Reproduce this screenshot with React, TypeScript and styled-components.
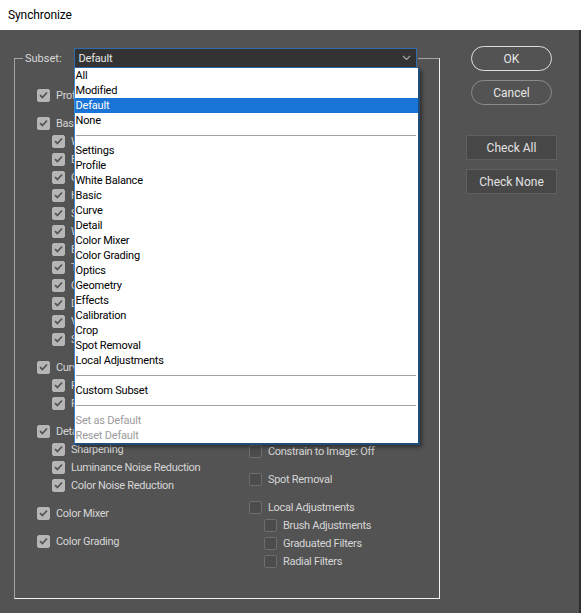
import React from "react";
import styled, { createGlobalStyle } from "styled-components";

const Global = createGlobalStyle`
  html, body { margin: 0; padding: 0; }
  body {
    width: 581px;
    height: 613px;
    overflow: hidden;
    font-family: Roboto, "Liberation Sans", sans-serif;
  }
`;

const Window = styled.div`
  width: 581px;
  height: 613px;
  display: flex;
  flex-direction: column;
  background: #535353;
`;

const TitleBar = styled.div`
  height: 30px;
  flex: none;
  display: flex;
  align-items: center;
  padding-left: 8px;
  background: #ffffff;
  color: #000000;
  font-size: 12px;
  letter-spacing: -0.1px;
`;

const Body = styled.div`
  flex: 1;
  display: flex;
  align-items: flex-start;
  padding: 16px 0 0 14px;
  border-right: 2px solid #2e2e2e;
`;

const Group = styled.fieldset`
  margin: 2px 0 0 0;
  padding: 0 0 0 8px;
  width: 426px;
  height: 551px;
  box-sizing: border-box;
  min-inline-size: 0;
  border: 1px solid;
  border-color: #a4a4a4 #f2f2f2 #f2f2f2 #a4a4a4;
`;

const Legend = styled.legend`
  display: flex;
  align-items: center;
  gap: 12px;
  padding: 0 1px 0 2px;
  color: #d8d8d8;
  font-size: 11px;
`;

const Select = styled.div`
  position: relative;
  width: 343px;
  height: 20px;
  box-sizing: border-box;
  display: flex;
  align-items: center;
  justify-content: space-between;
  padding: 0 5px 0 4px;
  background: #333333;
  border: 1px solid #2f6cab;
  color: #e6e6e6;
  font-size: 11px;
  letter-spacing: -0.2px;
`;

const Menu = styled.div`
  position: absolute;
  top: calc(100% + 1px);
  left: -1px;
  width: 346px;
  box-sizing: border-box;
  background: #ffffff;
  border-left: 1px solid #3b85d8;
  border-right: 2px solid #1e4b78;
  border-bottom: 2px solid #1e4b78;
  box-shadow: 2px 2px 4px rgba(0, 0, 0, 0.45);
  z-index: 10;
`;

const MenuItem = styled.div<{ $active?: boolean; $disabled?: boolean }>`
  height: 15px;
  line-height: 15px;
  padding-left: 1px;
  font-size: 11px;
  letter-spacing: -0.2px;
  white-space: nowrap;
  color: ${(p) => (p.$active ? "#ffffff" : p.$disabled ? "#9b9b9b" : "#000000")};
  background: ${(p) => (p.$active ? "#1a74d8" : "transparent")};
`;

const MenuSeparator = styled.div`
  height: 15px;
  display: flex;
  align-items: center;
  &::after {
    content: "";
    flex: 1;
    height: 1px;
    margin: 0 2px 0 1px;
    background: #a3a3a3;
  }
`;

const Columns = styled.div`
  display: grid;
  grid-template-columns: 212px 1fr;
  padding: 18px 0 0 14px;
`;

const Column = styled.div`
  display: flex;
  flex-direction: column;
`;

const Row = styled.div<{ $sub?: boolean; $group?: boolean }>`
  display: flex;
  align-items: center;
  gap: 6px;
  height: 18px;
  padding-left: ${(p) => (p.$sub ? "15px" : "0")};
  margin-top: ${(p) => (p.$group ? "10px" : "0")};
  color: #d6d6d6;
  font-size: 11px;
  letter-spacing: -0.3px;
  white-space: nowrap;
  &:first-child {
    margin-top: 0;
  }
`;

const Box = styled.span<{ $checked?: boolean }>`
  width: 13px;
  height: 13px;
  flex: none;
  box-sizing: border-box;
  border-radius: 2px;
  display: flex;
  align-items: center;
  justify-content: center;
  background: ${(p) => (p.$checked ? "#b6b6b6" : "#4c4c4c")};
  border: 1px solid ${(p) => (p.$checked ? "#b6b6b6" : "#6d6d6d")};
`;

const Buttons = styled.div`
  display: flex;
  flex-direction: column;
  align-items: center;
  width: 91px;
  margin-left: 26px;
`;

const PillButton = styled.button<{ $primary?: boolean }>`
  width: 81px;
  height: 25px;
  box-sizing: border-box;
  border-radius: 13px;
  border: 1.5px solid ${(p) => (p.$primary ? "#dedede" : "#8a8a8a")};
  background: transparent;
  color: #e6e6e6;
  font-family: inherit;
  font-size: 12px;
  padding: 0;
  & + & {
    margin-top: 9px;
  }
`;

const RectButton = styled.button<{ $first?: boolean }>`
  width: 91px;
  height: 25px;
  box-sizing: border-box;
  border: 1px solid #5f5f5f;
  background: #474747;
  color: #e2e2e2;
  font-family: inherit;
  font-size: 12px;
  padding: 0;
  margin-top: ${(p) => (p.$first ? "30px" : "9px")};
`;

type Item = { label: string; sub?: boolean; checked?: boolean };

const g = (label: string, checked: boolean): Item => ({ label, checked });
const s = (label: string, checked: boolean): Item => ({ label, sub: true, checked });

const leftItems: Item[] = [
  g("Profile", true),
  g("Basic", true),
  ...["White Balance", "Exposure", "Contrast", "Highlights", "Shadows", "Whites", "Blacks", "Texture", "Clarity", "Dehaze", "Vibrance", "Saturation"].map((l) => s(l, true)),
  g("Curve", true),
  s("Parametric Curve", true),
  s("Point Curve", true),
  g("Detail", true),
  s("Sharpening", true),
  s("Luminance Noise Reduction", true),
  s("Color Noise Reduction", true),
  g("Color Mixer", true),
  g("Color Grading", true),
];

const rightItems: Item[] = [
  g("Optics", false),
  s("Chromatic Aberration", false),
  s("Lens Profile Corrections", false),
  s("Defringe", false),
  s("Vignetting", false),
  g("Geometry", false),
  s("Upright Mode", false),
  s("Upright Transforms", false),
  s("Transform Adjustments", false),
  g("Effects", false),
  s("Post Crop Vignetting", false),
  s("Grain", false),
  g("Calibration", false),
  s("Process Version", false),
  g("Crop", false),
  s("Straighten Angle", false),
  s("Aspect Ratio", false),
  g("Constrain to Image: Off", false),
  g("Spot Removal", false),
  g("Local Adjustments", false),
  s("Brush Adjustments", false),
  s("Graduated Filters", false),
  s("Radial Filters", false),
];

type MenuEntry = { label?: string; sep?: boolean; active?: boolean; disabled?: boolean };

const menu: MenuEntry[] = [
  { label: "All" },
  { label: "Modified" },
  { label: "Default", active: true },
  { label: "None" },
  { sep: true },
  ...["Settings", "Profile", "White Balance", "Basic", "Curve", "Detail", "Color Mixer", "Color Grading", "Optics", "Geometry", "Effects", "Calibration", "Crop", "Spot Removal", "Local Adjustments"].map((label) => ({ label })),
  { sep: true },
  { label: "Custom Subset" },
  { sep: true },
  { label: "Set as Default", disabled: true },
  { label: "Reset Default", disabled: true },
];

const Check = () => (
  <svg width="9" height="8" viewBox="0 0 9 8">
    <polyline points="1,4.2 3.4,6.5 8,1.5" fill="none" stroke="#555555" strokeWidth="1.8" />
  </svg>
);

const Chevron = () => (
  <svg width="9" height="6" viewBox="0 0 9 6">
    <polyline points="1,1 4.5,4.5 8,1" fill="none" stroke="#a8a8a8" strokeWidth="1.2" />
  </svg>
);

const List = ({ items }: { items: Item[] }) => (
  <Column>
    {items.map((it, i) => (
      <Row key={i} $sub={it.sub} $group={!it.sub}>
        <Box $checked={it.checked}>{it.checked && <Check />}</Box>
        {it.label}
      </Row>
    ))}
  </Column>
);

export default function App() {
  return (
    <>
      <Global />
      <Window>
        <TitleBar>Synchronize</TitleBar>
        <Body>
          <Group>
            <Legend>
              Subset:
              <Select>
                Default
                <Chevron />
                <Menu>
                  {menu.map((m, i) =>
                    m.sep ? (
                      <MenuSeparator key={i} />
                    ) : (
                      <MenuItem key={i} $active={m.active} $disabled={m.disabled}>
                        {m.label}
                      </MenuItem>
                    )
                  )}
                </Menu>
              </Select>
            </Legend>
            <Columns>
              <List items={leftItems} />
              <List items={rightItems} />
            </Columns>
          </Group>
          <Buttons>
            <PillButton $primary>OK</PillButton>
            <PillButton>Cancel</PillButton>
            <RectButton $first>Check All</RectButton>
            <RectButton>Check None</RectButton>
          </Buttons>
        </Body>
      </Window>
    </>
  );
}
